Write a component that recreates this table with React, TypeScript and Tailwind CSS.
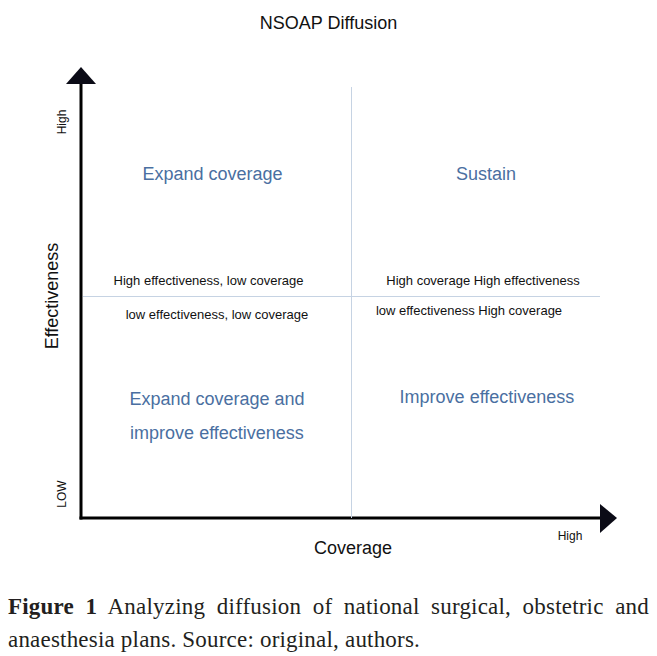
import React from 'react'

const sans = "font-['Liberation_Sans',Arial,sans-serif]"
const action = 'whitespace-nowrap text-[18px] leading-none text-[#4a6fa1]'
const note = 'whitespace-nowrap text-[13px] leading-none'

const QuadrantChart: React.FC = () => {
  return (
    <div className={`relative h-[544px] w-full ${sans} text-[#111]`}>
      {/* axes and arrow heads */}
      <svg className="absolute inset-0" width="657" height="544" viewBox="0 0 657 544">
        <line x1="81" y1="36" x2="81" y2="473.5" stroke="#000" strokeWidth="3" />
        <line x1="79.5" y1="472" x2="602" y2="472" stroke="#000" strokeWidth="3" />
        <polygon points="81,21 66,38 96,38" fill="#0b0b16" />
        <polygon points="600,458 617,472 600,487" fill="#0b0b16" />
      </svg>

      {/* the four quadrants */}
      <div className="absolute left-[83px] top-[41px] grid grid-cols-[269px_248px] grid-rows-[210px_221px]">
        <div className="flex flex-col items-center border-b border-r border-[#c6d3e3] pb-[9px] pt-[78px]">
          <span className={`${action} mr-[9px]`}>Expand coverage</span>
          <span className={`${note} mr-[17px] mt-auto`}>High effectiveness, low coverage</span>
        </div>
        <div className="flex flex-col items-center border-b border-[#c6d3e3] pb-[9px] pt-[78px]">
          <span className={`${action} ml-[20px]`}>Sustain</span>
          <span className={`${note} ml-[14px] mt-auto`}>High coverage High effectiveness</span>
        </div>
        <div className="flex flex-col items-center gap-[61px] border-r border-[#c6d3e3] pt-[11px]">
          <span className={note}>low effectiveness, low coverage</span>
          <span className="whitespace-nowrap text-center text-[18px] leading-[34px] text-[#4a6fa1]">
            Expand coverage and
            <br />
            improve effectiveness
          </span>
        </div>
        <div className="flex flex-col items-center gap-[71px] pt-[7px]">
          <span className={`${note} mr-[14px]`}>low effectiveness High coverage</span>
          <span className={`${action} ml-[22px]`}>Improve effectiveness</span>
        </div>
      </div>

      {/* axis labels */}
      <span className="absolute left-[62px] top-[76px] -translate-x-1/2 -translate-y-1/2 -rotate-90 whitespace-nowrap text-[12px] leading-none">
        High
      </span>
      <span className="absolute left-[52px] top-[250px] -translate-x-1/2 -translate-y-1/2 -rotate-90 whitespace-nowrap text-[18px] leading-none">
        Effectiveness
      </span>
      <span className="absolute left-[62px] top-[448px] -translate-x-1/2 -translate-y-1/2 -rotate-90 whitespace-nowrap text-[12px] leading-none">
        LOW
      </span>
      <span className="absolute left-[570px] top-[490px] -translate-x-1/2 -translate-y-1/2 whitespace-nowrap text-[12px] leading-none">
        High
      </span>
      <span className="absolute left-[353px] top-[502px] -translate-x-1/2 -translate-y-1/2 whitespace-nowrap text-[18px] leading-none">
        Coverage
      </span>
    </div>
  )
}

const App: React.FC = () => {
  return (
    <div className="relative h-[656px] w-[657px] overflow-hidden bg-white">
      <h1 className={`flex h-[46px] items-center justify-center text-[18px] font-normal text-[#111] ${sans}`}>
        NSOAP Diffusion
      </h1>
      <QuadrantChart />
      <p className="px-2 text-justify font-['Liberation_Serif','Times_New_Roman',serif] text-[23px] leading-[33px] tracking-[0.2px] text-[#231f20]">
        <b>Figure 1</b> Analyzing diffusion of national surgical, obstetric and anaesthesia plans. Source:
        original, authors.
      </p>
    </div>
  )
}

export default App
